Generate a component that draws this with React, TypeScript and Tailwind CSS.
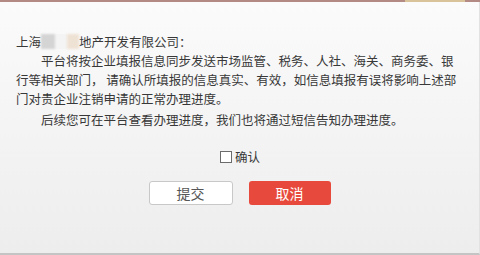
import * as React from "react";

export default function App() {
  return (
    <div
      className="flex h-[255px] w-[480px] flex-col overflow-hidden bg-gradient-to-b from-[#fbfbfb] to-[#ededed] text-[#383838]"
      style={{ fontFamily: '"Noto Sans CJK SC", "Noto Sans", sans-serif' }}
    >
      {/* top strip */}
      <div className="flex h-[2px] shrink-0">
        <div className="flex-1 bg-[#b48a84]" />
        <div className="w-[60px] bg-[#d8c39a]" />
        <div className="w-[15px] bg-[#b48a84]" />
      </div>

      <div className="flex flex-1 flex-col border-b-2 border-r border-[#c4c4c4] border-r-[#e2e2e2]">
        <div className="pl-4 pr-[18px] pt-[30px] text-[12.5px] leading-[19px]">
          <p className="flex items-center">
            上海
            <span className="inline-block h-[15px] w-[14px] bg-[#d4d4d4] blur-[1px]" />
            <span className="inline-block h-[15px] w-[12px] bg-[#f4f4f4]" />
            <span className="inline-block h-[15px] w-[12px] bg-[#eee2d4] blur-[1px]" />
            地产开发有限公司：
          </p>
          <p className="indent-[25px]">
            平台将按企业填报信息同步发送市场监管、税务、人社、海关、商务委、银行等相关部门， 请确认所填报的信息真实、有效，如信息填报有误将影响上述部门对贵企业注销申请的正常办理进度。
          </p>
          <p className="mt-[2px] indent-[25px]">
            后续您可在平台查看办理进度，我们也将通过短信告知办理进度。
          </p>
        </div>

        <label className="mt-[18px] flex items-center justify-center gap-[3px] pl-[1px] text-[12.5px] leading-[19px]">
          <span className="inline-block h-[12px] w-[12px] border border-[#6b6b6b] bg-white" />
          确认
        </label>

        <div className="mt-[15px] flex justify-center gap-4">
          <button className="h-[24px] w-[84px] rounded-[3px] border border-[#c8c8c8] bg-white text-[14px] text-[#555]">
            提交
          </button>
          <button className="h-[24px] w-[82px] rounded-[3px] bg-[#e8493d] text-[14px] text-white">
            取消
          </button>
        </div>
      </div>
    </div>
  );
}
